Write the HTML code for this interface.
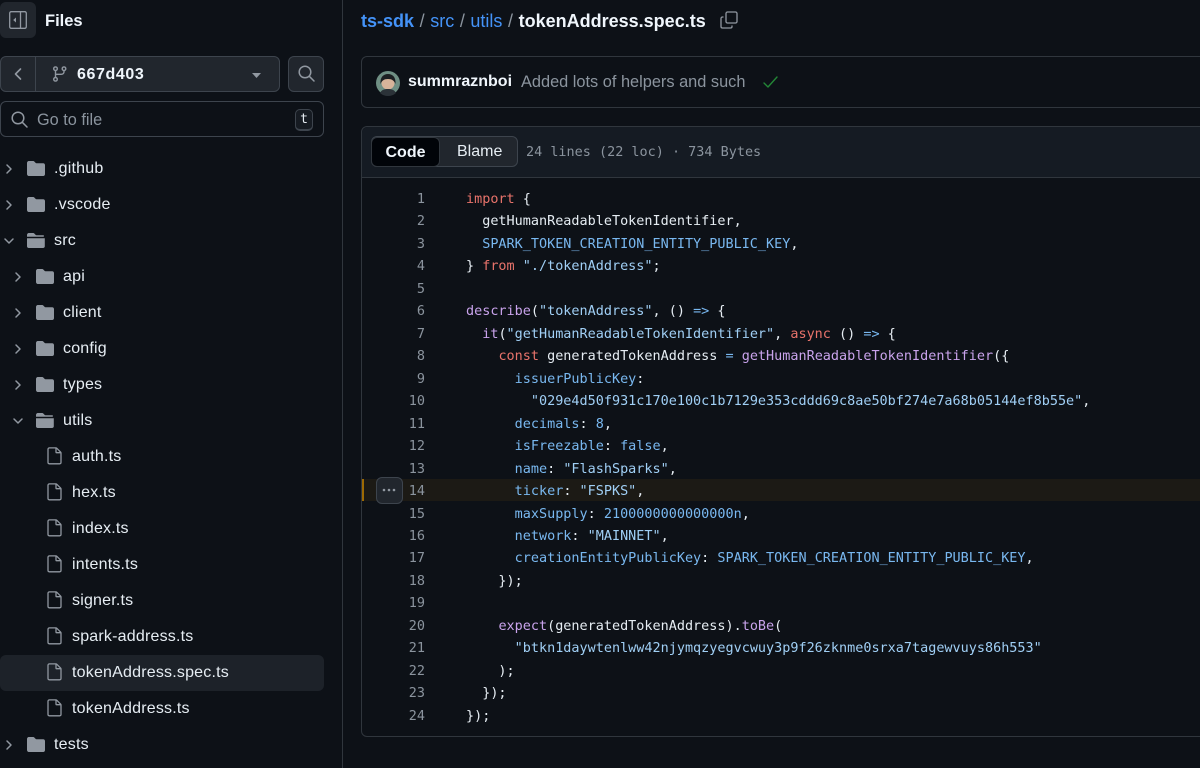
<!DOCTYPE html>
<html><head><meta charset="utf-8">
<style>
html,body{margin:0;padding:0;background:#0d1117;width:1200px;height:768px;overflow:hidden}
body{position:relative;font-family:"Liberation Sans",sans-serif;color:#e6edf3;filter:blur(.3px)}
.a{position:absolute;box-sizing:border-box}
.t{position:absolute;white-space:pre;line-height:22px}
.ln{position:absolute;left:385px;width:40px;text-align:right;font:13.47px/22px "DejaVu Sans Mono",monospace;color:#8b949e;margin-top:1px}
.c{position:absolute;left:466px;white-space:pre;font:13.47px/22px "DejaVu Sans Mono",monospace;color:#e6edf3;margin-top:1px}
.k{color:#e8736b}.f{color:#c9a3ec}.v{color:#79b8f0}.s{color:#a0cff5}
.tree{position:absolute;font-size:16px;line-height:22px;color:#e6edf3;white-space:pre;letter-spacing:.2px;margin-top:1px}
.d{margin-top:0}
svg{position:absolute;overflow:visible}
</style></head><body>
<div class="a" style="left:342px;top:0;width:1px;height:768px;background:#30363d"></div>

<div class="a" style="left:0;top:2px;width:36px;height:36px;background:#21262d;border-radius:6px"></div>
<svg style="left:9px;top:11px" width="18" height="18" viewBox="0 0 18 18" fill="none" stroke="#9198a1" stroke-width="1.3"><rect x=".7" y=".7" width="16.6" height="16.6" rx="1.5"/><path d="M11.5 1v16"/><path d="M7 6.5v5L4.2 9z" fill="#9198a1" stroke="none"/></svg>
<div class="t" style="left:45px;top:10px;font-size:16.5px;font-weight:700;color:#f0f6fc">Files</div>

<div class="a" style="left:0;top:56px;width:280px;height:36px;background:#21262d;border:1px solid #3d444d;border-radius:6px"></div>
<div class="a" style="left:35px;top:57px;width:1px;height:34px;background:#3d444d"></div>
<svg style="left:13px;top:67px" width="10" height="14" viewBox="0 0 10 14" fill="none" stroke="#9198a1" stroke-width="1.6" stroke-linecap="round" stroke-linejoin="round"><path d="M7.5 2 2.5 7l5 5"/></svg>
<svg style="left:52px;top:66px" width="15" height="16" viewBox="0 0 15 16" fill="none" stroke="#9198a1" stroke-width="1.4"><circle cx="3.5" cy="2.7" r="1.8"/><circle cx="3.5" cy="13.3" r="1.8"/><circle cx="12" cy="2.7" r="1.8"/><path d="M3.5 4.500v7M12 4.500v1.200c0 1.600-1.200 2.600-2.800 2.600H3.500"/></svg>
<div class="t" style="left:77px;top:64px;font-size:16px;font-weight:700;color:#f0f6fc;letter-spacing:.6px">667d403</div>
<svg style="left:252px;top:73px" width="9" height="5" viewBox="0 0 11 6"><path d="M0 0h11L5.500 6z" fill="#9198a1"/></svg>
<div class="a" style="left:288px;top:56px;width:36px;height:36px;background:#21262d;border:1px solid #3d444d;border-radius:6px"></div>
<svg style="left:298px;top:65px" width="17" height="17" viewBox="0 0 17 17" fill="none" stroke="#9198a1" stroke-width="1.5" stroke-linecap="round"><circle cx="7" cy="7" r="5.8"/><path d="M11.200 11.200 16 16"/></svg>

<div class="a" style="left:0;top:101px;width:324px;height:36px;border:1px solid #3d444d;border-radius:6px"></div>
<svg style="left:11px;top:111px" width="17" height="17" viewBox="0 0 17 17" fill="none" stroke="#9198a1" stroke-width="1.5" stroke-linecap="round"><circle cx="7" cy="7" r="5.8"/><path d="M11.200 11.200 16 16"/></svg>
<div class="t" style="left:37px;top:109px;font-size:16.3px;color:#8b949e">Go to file</div>
<div class="a" style="left:295px;top:109px;width:18px;height:22px;border:1px solid #3d444d;border-bottom-width:2px;border-radius:5px;background:#161b22;text-align:center;font:13px/19px 'DejaVu Sans Mono',monospace;color:#e6edf3">t</div>

<div class="a" style="left:0;top:655px;width:324px;height:36px;background:#21262d;border-radius:6px;opacity:.85"></div>

<svg width="0" height="0" style="position:absolute">
<defs>
<symbol id="fc" viewBox="0 0 18 15"><path d="M0 2C0 .9.800 0 1.800 0h4.300c.6 0 1 .3 1.400.7l1 1.100c.3.300.6.500 1 .5h6.700c1 0 1.800.8 1.800 1.800v9c0 1-.8 1.900-1.800 1.900H1.800C.8 15 0 14.100 0 13z" fill="#9198a1"/></symbol>
<symbol id="fo" viewBox="0 0 18 15"><path d="M0 2C0 .9.800 0 1.800 0h4.300c.6 0 1 .3 1.400.7l1 1.100c.3.300.6.500 1 .5h7.300v1.400H0z" fill="#9198a1"/><path d="M0 5.200h17.800v8c0 1-.8 1.800-1.800 1.800H1.800C.8 15 0 14.200 0 13.200z" fill="#9198a1"/></symbol>
<symbol id="fi" viewBox="0 0 15 18"><path d="M1 2.300C1 1.500 1.600.9 2.400.9h6.500c.3 0 .6.100.8.300l3.900 3.900c.2.200.4.500.4.800v9.500c0 .8-.6 1.400-1.400 1.400H2.400c-.8 0-1.400-.6-1.400-1.400z M9 1v4.200c0 .3.200.5.500.5h4" fill="none" stroke="#9198a1" stroke-width="1.300"/></symbol>
<symbol id="cr" viewBox="0 0 8 12"><path d="M2 2l4 4-4 4" fill="none" stroke="#9198a1" stroke-width="1.500" stroke-linecap="round" stroke-linejoin="round"/></symbol>
<symbol id="cd" viewBox="0 0 12 8"><path d="M2 2l4 4 4-4" fill="none" stroke="#9198a1" stroke-width="1.500" stroke-linecap="round" stroke-linejoin="round"/></symbol>
</defs></svg>

<svg style="left:5px;top:163px" width="8" height="12"><use href="#cr"/></svg>
<svg style="left:27px;top:161px" width="18" height="15"><use href="#fc"/></svg>
<div class="tree d" style="left:54px;top:158px">.github</div>
<svg style="left:5px;top:199px" width="8" height="12"><use href="#cr"/></svg>
<svg style="left:27px;top:197px" width="18" height="15"><use href="#fc"/></svg>
<div class="tree d" style="left:54px;top:194px">.vscode</div>
<svg style="left:3px;top:237px" width="12" height="8"><use href="#cd"/></svg>
<svg style="left:27px;top:233px" width="18" height="15"><use href="#fo"/></svg>
<div class="tree d" style="left:54px;top:230px">src</div>

<svg style="left:14px;top:271px" width="8" height="12"><use href="#cr"/></svg>
<svg style="left:36px;top:269px" width="18" height="15"><use href="#fc"/></svg>
<div class="tree d" style="left:63px;top:266px">api</div>
<svg style="left:14px;top:307px" width="8" height="12"><use href="#cr"/></svg>
<svg style="left:36px;top:305px" width="18" height="15"><use href="#fc"/></svg>
<div class="tree d" style="left:63px;top:302px">client</div>
<svg style="left:14px;top:343px" width="8" height="12"><use href="#cr"/></svg>
<svg style="left:36px;top:341px" width="18" height="15"><use href="#fc"/></svg>
<div class="tree d" style="left:63px;top:338px">config</div>
<svg style="left:14px;top:379px" width="8" height="12"><use href="#cr"/></svg>
<svg style="left:36px;top:377px" width="18" height="15"><use href="#fc"/></svg>
<div class="tree d" style="left:63px;top:374px">types</div>
<svg style="left:12px;top:417px" width="12" height="8"><use href="#cd"/></svg>
<svg style="left:36px;top:413px" width="18" height="15"><use href="#fo"/></svg>
<div class="tree d" style="left:63px;top:410px">utils</div>

<svg style="left:47px;top:447px" width="15" height="18"><use href="#fi"/></svg>
<div class="tree" style="left:72px;top:445px">auth.ts</div>
<svg style="left:47px;top:483px" width="15" height="18"><use href="#fi"/></svg>
<div class="tree" style="left:72px;top:481px">hex.ts</div>
<svg style="left:47px;top:519px" width="15" height="18"><use href="#fi"/></svg>
<div class="tree" style="left:72px;top:517px">index.ts</div>
<svg style="left:47px;top:555px" width="15" height="18"><use href="#fi"/></svg>
<div class="tree" style="left:72px;top:553px">intents.ts</div>
<svg style="left:47px;top:591px" width="15" height="18"><use href="#fi"/></svg>
<div class="tree" style="left:72px;top:589px">signer.ts</div>
<svg style="left:47px;top:627px" width="15" height="18"><use href="#fi"/></svg>
<div class="tree" style="left:72px;top:625px">spark-address.ts</div>
<svg style="left:47px;top:663px" width="15" height="18"><use href="#fi"/></svg>
<div class="tree" style="left:72px;top:661px">tokenAddress.spec.ts</div>
<svg style="left:47px;top:699px" width="15" height="18"><use href="#fi"/></svg>
<div class="tree" style="left:72px;top:697px">tokenAddress.ts</div>
<svg style="left:5px;top:739px" width="8" height="12"><use href="#cr"/></svg>
<svg style="left:27px;top:737px" width="18" height="15"><use href="#fc"/></svg>
<div class="tree d" style="left:54px;top:734px">tests</div>

<div class="t" style="left:361px;top:10px;font-size:18px;color:#8b949e;word-spacing:.6px"><b style="color:#4493f8">ts-sdk</b> / <span style="color:#4493f8">src</span> / <span style="color:#4493f8">utils</span> / <b style="color:#f0f6fc">tokenAddress.spec.ts</b></div>
<svg style="left:720px;top:11px" width="18" height="18" viewBox="0 0 18 18" fill="none" stroke="#9198a1" stroke-width="1.300"><rect x="6" y="1" width="11" height="11" rx="1.500"/><path d="M3.500 6H2.500C1.600 6 1 6.600 1 7.500v8c0 .9.600 1.500 1.500 1.500h8c.9 0 1.500-.6 1.500-1.500v-1"/></svg>

<div class="a" style="left:361px;top:56px;width:860px;height:52px;border:1px solid #30363d;border-radius:6px"></div>
<svg style="left:376px;top:71px" width="24" height="24" viewBox="0 0 24 24"><circle cx="12" cy="12" r="12" fill="#6f8f84"/><circle cx="12" cy="12" r="6.500" fill="#d8b49a"/><path d="M4.500 13c-.5-7 3-10 7.500-10s8 3 7.500 10c-1.500-3.500-3.500-5-7.500-5s-6 1.500-7.500 5z" fill="#1c1f22"/><path d="M4 22c1.500-3 4-4 8-4s6.500 1 8 4a12 12 0 0 1-16 0z" fill="#2b3238"/></svg>
<div class="t" style="left:408px;top:71px;font-size:16px;font-weight:700;color:#f0f6fc">summraznboi</div>
<div class="t" style="left:521px;top:71px;font-size:16.350px;color:#8b949e">Added lots of helpers and such</div>
<svg style="left:763px;top:76px" width="15" height="13" viewBox="0 0 15 13" fill="none" stroke="#238636" stroke-width="1.400" stroke-linecap="round" stroke-linejoin="round"><path d="M1 7l4 4 9-10"/></svg>

<div class="a" style="left:361px;top:126px;width:860px;height:611px;border:1px solid #30363d;border-radius:6px"></div>
<div class="a" style="left:362px;top:127px;width:838px;height:51px;background:#151b23;border-bottom:1px solid #30363d;border-radius:6px 0 0 0"></div>
<div class="a" style="left:371px;top:136px;width:147px;height:31px;background:#21262d;border:1px solid #3d444d;border-radius:6px"></div>
<div class="a" style="left:371px;top:137px;width:69px;height:30px;background:#010409;border:1px solid #30363d;border-radius:6px;text-align:center;font-size:16px;line-height:29px;font-weight:700;color:#f0f6fc">Code</div>
<div class="t" style="left:457px;top:141px;font-size:16px;color:#e6edf3">Blame</div>
<div class="t" style="left:526px;top:141px;font:13.47px/22px 'DejaVu Sans Mono',monospace;color:#8b949e">24 lines (22 loc) · 734 Bytes</div>

<div class="a" style="left:362px;top:479px;width:838px;height:22px;background:#1c1a15"></div>
<div class="a" style="left:362px;top:479px;width:2px;height:22px;background:#9e6a03"></div>
<div class="a" style="left:376px;top:477px;width:27px;height:27px;background:#21262d;border:1px solid #3d444d;border-radius:6px"></div>
<svg style="left:382px;top:488px" width="14" height="4"><circle cx="2" cy="2" r="1.300" fill="#9198a1"/><circle cx="7" cy="2" r="1.300" fill="#9198a1"/><circle cx="12" cy="2" r="1.300" fill="#9198a1"/></svg>

<div class="ln" style="top:187px">1</div><div class="c" style="top:187px"><span class="k">import</span> {</div>
<div class="ln" style="top:209px">2</div><div class="c" style="top:209px">  getHumanReadableTokenIdentifier,</div>
<div class="ln" style="top:232px">3</div><div class="c" style="top:232px">  <span class="v">SPARK_TOKEN_CREATION_ENTITY_PUBLIC_KEY</span>,</div>
<div class="ln" style="top:254px">4</div><div class="c" style="top:254px">} <span class="k">from</span> <span class="s">"./tokenAddress"</span>;</div>
<div class="ln" style="top:277px">5</div>
<div class="ln" style="top:299px">6</div><div class="c" style="top:299px"><span class="f">describe</span>(<span class="s">"tokenAddress"</span>, () <span class="v">=&gt;</span> {</div>
<div class="ln" style="top:322px">7</div><div class="c" style="top:322px">  <span class="f">it</span>(<span class="s">"getHumanReadableTokenIdentifier"</span>, <span class="k">async</span> () <span class="v">=&gt;</span> {</div>
<div class="ln" style="top:344px">8</div><div class="c" style="top:344px">    <span class="k">const</span> generatedTokenAddress <span class="v">=</span> <span class="f">getHumanReadableTokenIdentifier</span>({</div>
<div class="ln" style="top:367px">9</div><div class="c" style="top:367px">      <span class="v">issuerPublicKey</span>:</div>
<div class="ln" style="top:389px">10</div><div class="c" style="top:389px">        <span class="s">"029e4d50f931c170e100c1b7129e353cddd69c8ae50bf274e7a68b05144ef8b55e"</span>,</div>
<div class="ln" style="top:412px">11</div><div class="c" style="top:412px">      <span class="v">decimals</span>: <span class="v">8</span>,</div>
<div class="ln" style="top:434px">12</div><div class="c" style="top:434px">      <span class="v">isFreezable</span>: <span class="v">false</span>,</div>
<div class="ln" style="top:457px">13</div><div class="c" style="top:457px">      <span class="v">name</span>: <span class="s">"FlashSparks"</span>,</div>
<div class="ln" style="top:479px">14</div><div class="c" style="top:479px">      <span class="v">ticker</span>: <span class="s">"FSPKS"</span>,</div>
<div class="ln" style="top:502px">15</div><div class="c" style="top:502px">      <span class="v">maxSupply</span>: <span class="v">2100000000000000n</span>,</div>
<div class="ln" style="top:524px">16</div><div class="c" style="top:524px">      <span class="v">network</span>: <span class="s">"MAINNET"</span>,</div>
<div class="ln" style="top:546px">17</div><div class="c" style="top:546px">      <span class="v">creationEntityPublicKey</span>: <span class="v">SPARK_TOKEN_CREATION_ENTITY_PUBLIC_KEY</span>,</div>
<div class="ln" style="top:569px">18</div><div class="c" style="top:569px">    });</div>
<div class="ln" style="top:591px">19</div>
<div class="ln" style="top:614px">20</div><div class="c" style="top:614px">    <span class="f">expect</span>(generatedTokenAddress).<span class="f">toBe</span>(</div>
<div class="ln" style="top:636px">21</div><div class="c" style="top:636px">      <span class="s">"btkn1daywtenlww42njymqzyegvcwuy3p9f26zknme0srxa7tagewvuys86h553"</span></div>
<div class="ln" style="top:659px">22</div><div class="c" style="top:659px">    );</div>
<div class="ln" style="top:681px">23</div><div class="c" style="top:681px">  });</div>
<div class="ln" style="top:704px">24</div><div class="c" style="top:704px">});</div>
</body></html>
